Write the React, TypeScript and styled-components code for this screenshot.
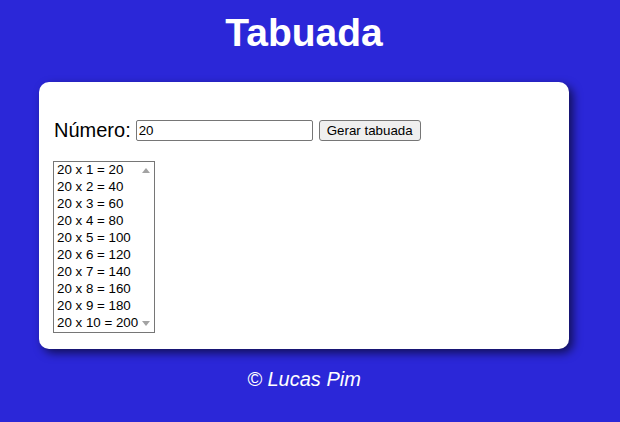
import React, { useState } from 'react';
import styled, { createGlobalStyle } from 'styled-components';

const GlobalStyle = createGlobalStyle`
  body {
    margin: 8px;
    padding-right: 12px;
    background: #2b27d8;
    font-family: "Liberation Sans", Arial, sans-serif;
  }
`;

const Title = styled.h1`
  margin: 2px 0 0;
  text-align: center;
  color: #fff;
  font-size: 39px;
  font-weight: bold;
  line-height: 45px;
`;

const Card = styled.section`
  width: 530px;
  box-sizing: border-box;
  margin: 27px auto 0;
  padding: 37px 14px 16px;
  background: #fff;
  border-radius: 10px;
  box-shadow: 4px 4px 10px rgba(0, 0, 0, 0.6);
`;

const FormRow = styled.div`
  display: flex;
  align-items: center;
  height: 23px;
  gap: 5px;
`;

const Label = styled.label`
  font-size: 20px;
  line-height: 23px;
  color: #000;
  margin-left: 1px;
`;

const NumberInput = styled.input`
  width: 177px;
  height: 21px;
  box-sizing: border-box;
  padding: 1px 2px;
  border: 1px solid #767676;
  border-radius: 2px;
  font-family: "Liberation Sans", Arial, sans-serif;
  font-size: 13.333px;
  color: #000;
  outline: none;
`;

const Button = styled.button`
  height: 21px;
  width: 102px;
  box-sizing: border-box;
  margin-left: 1px;
  padding: 1px 6px;
  background: #efefef;
  border: 1px solid #767676;
  border-radius: 3px;
  font-family: "Liberation Sans", Arial, sans-serif;
  font-size: 13.333px;
  color: #000;
`;

const ListWrap = styled.div`
  position: relative;
  width: 102px;
  margin-top: 19px;
`;

const ResultList = styled.select`
  display: block;
  width: 102px;
  height: 172px;
  box-sizing: border-box;
  padding: 0;
  border: 1px solid #767676;
  border-radius: 0;
  font-family: "Liberation Sans", Arial, sans-serif;
  font-size: 13.333px;
  color: #000;
  background: #fff;
  overflow-y: auto;
  outline: none;

  option {
    padding: 0 2px 1px 3px;
    line-height: 16px;
    color: #000;
  }
`;

/* scroll arrows of the list box, drawn over its right edge */
const ScrollArrow = styled.span<{ $dir: 'up' | 'down' }>`
  position: absolute;
  right: 5px;
  width: 0;
  height: 0;
  border-left: 4px solid transparent;
  border-right: 4px solid transparent;
  pointer-events: none;
  ${({ $dir }) =>
    $dir === 'up'
      ? 'top: 7px; border-bottom: 5px solid #a3a3a3;'
      : 'bottom: 7px; border-top: 5px solid #a3a3a3;'}
`;

const Footer = styled.footer`
  margin-top: 19px;
  text-align: center;
  color: #fff;
  font-size: 20px;
  font-style: italic;
  line-height: 23px;
`;

export default function App() {
  const [numero, setNumero] = useState('20');
  const [base, setBase] = useState(20);

  const linhas = Array.from({ length: 10 }, (_, i) => `${base} x ${i + 1} = ${base * (i + 1)}`);

  return (
    <>
      <GlobalStyle />
      <Title>Tabuada</Title>
      <Card>
        <FormRow>
          <Label htmlFor="numero">Número:</Label>
          <NumberInput id="numero" type="text" value={numero} onChange={(e) => setNumero(e.target.value)} />
          <Button onClick={() => setBase(Number(numero) || 0)}>Gerar tabuada</Button>
        </FormRow>
        <ListWrap>
          <ResultList size={10}>
            {linhas.map((linha, index) => (
              <option key={index.toString()}>{linha}</option>
            ))}
          </ResultList>
          <ScrollArrow $dir="up" />
          <ScrollArrow $dir="down" />
        </ListWrap>
      </Card>
      <Footer>© Lucas Pim</Footer>
    </>
  );
}
